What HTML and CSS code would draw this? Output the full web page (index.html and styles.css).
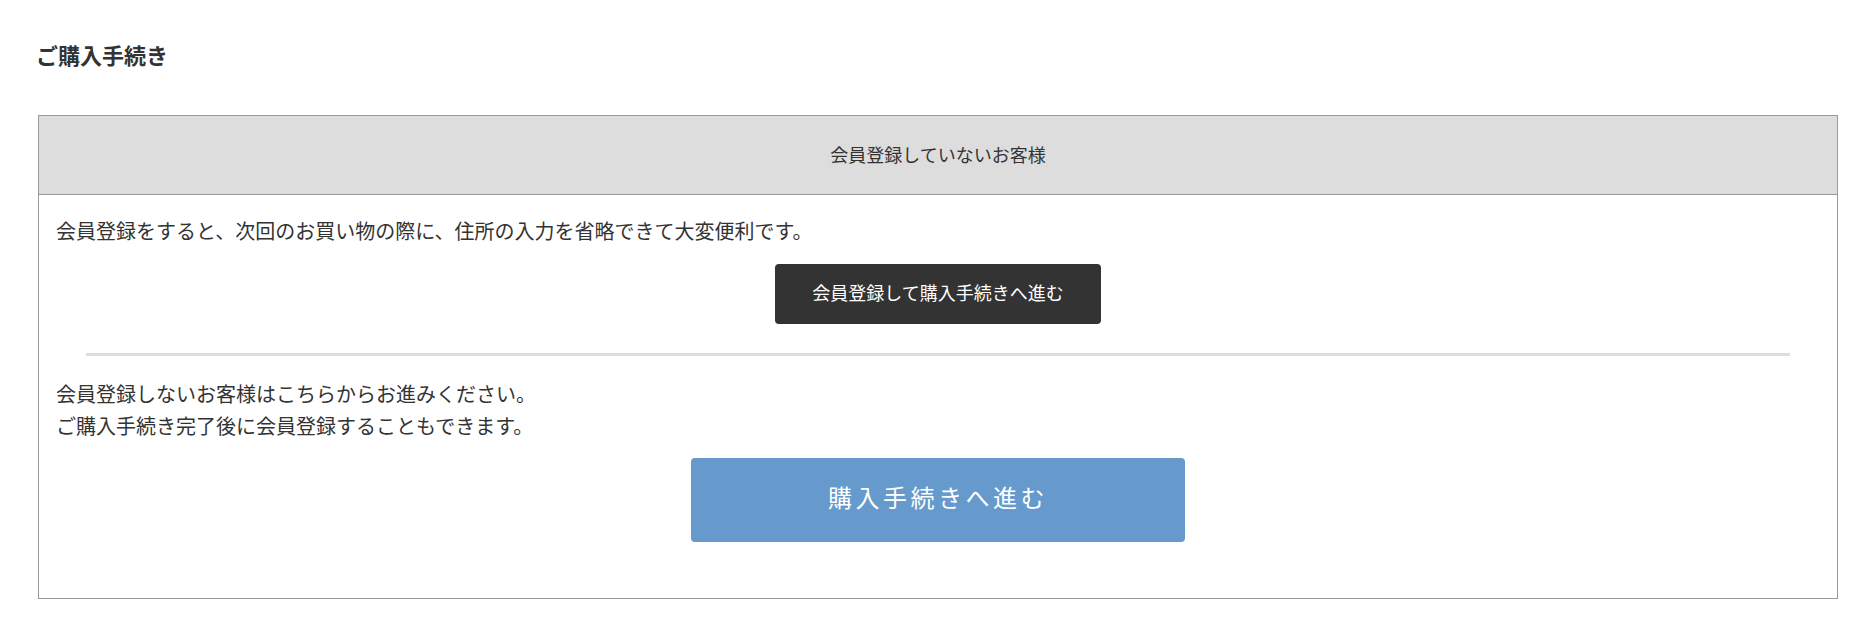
FILE: index.html
```html
<!DOCTYPE html>
<html lang="ja">
<head>
  <meta charset="UTF-8">
  <meta name="viewport" content="width=device-width, initial-scale=1.0">
  <title>ご購入手続き</title>
  <link rel="stylesheet" href="styles.css">
</head>
<body>
  <div class="page">
    <h1 class="page-title">ご購入手続き</h1>

    <!-- 非会員 -->
    <div class="guest-box">
      <div class="guest-head">会員登録していないお客様</div>
      <div class="guest-body">
        <p class="note">会員登録をすると、次回のお買い物の際に、住所の入力を省略できて大変便利です。</p>
        <div class="btn-row">
          <a class="btn-dark" href="#">会員登録して購入手続きへ進む</a>
        </div>
        <hr class="divider">
        <p class="note">会員登録しないお客様はこちらからお進みください。<br>ご購入手続き完了後に会員登録することもできます。</p>
        <div class="btn-row">
          <a class="btn-main" href="#">購入手続きへ進む</a>
        </div>
      </div>
    </div>
  </div>
</body>
</html>
```

FILE: styles.css
```css
body {
  margin: 0;
  font-family: "Noto Sans CJK JP", "Noto Sans", sans-serif;
  color: #333;
  background: #fff;
}
.page {
  padding: 37px 34px 0 38px;
}
.page-title {
  margin: 0 0 44px -2px;
  font-size: 22px;
  line-height: 34px;
  font-weight: bold;
  color: #333;
}
.guest-box {
  border: 1px solid #999;
}
.guest-head {
  height: 79px;
  display: flex;
  align-items: center;
  justify-content: center;
  background: #ddd;
  border-bottom: 1px solid #999;
  font-size: 18px;
  color: #333;
  padding-bottom: 2px;
  box-sizing: border-box;
}
.guest-body {
  padding: 20px 17px 56px;
}
.note {
  margin: 0;
  font-size: 20px;
  line-height: 32px;
}
.btn-row {
  display: flex;
  justify-content: center;
  margin-top: 17px;
}
.btn-dark {
  display: flex;
  align-items: center;
  justify-content: center;
  width: 326px;
  height: 60px;
  box-sizing: border-box;
  padding-bottom: 4px;
  background: #333;
  color: #fff;
  border-radius: 4px;
  font-size: 18px;
  text-decoration: none;
}
.divider {
  margin: 29px 30px 22px;
  border: none;
  height: 3px;
  background: #ddd;
}
.btn-main {
  display: flex;
  align-items: center;
  justify-content: center;
  width: 494px;
  height: 84px;
  box-sizing: border-box;
  padding-bottom: 7px;
  background: #6699cc;
  color: #fff;
  border-radius: 4px;
  font-size: 24px;
  letter-spacing: 3.5px;
  text-decoration: none;
}
.guest-body .btn-row:last-child {
  margin-top: 16px;
}
```
